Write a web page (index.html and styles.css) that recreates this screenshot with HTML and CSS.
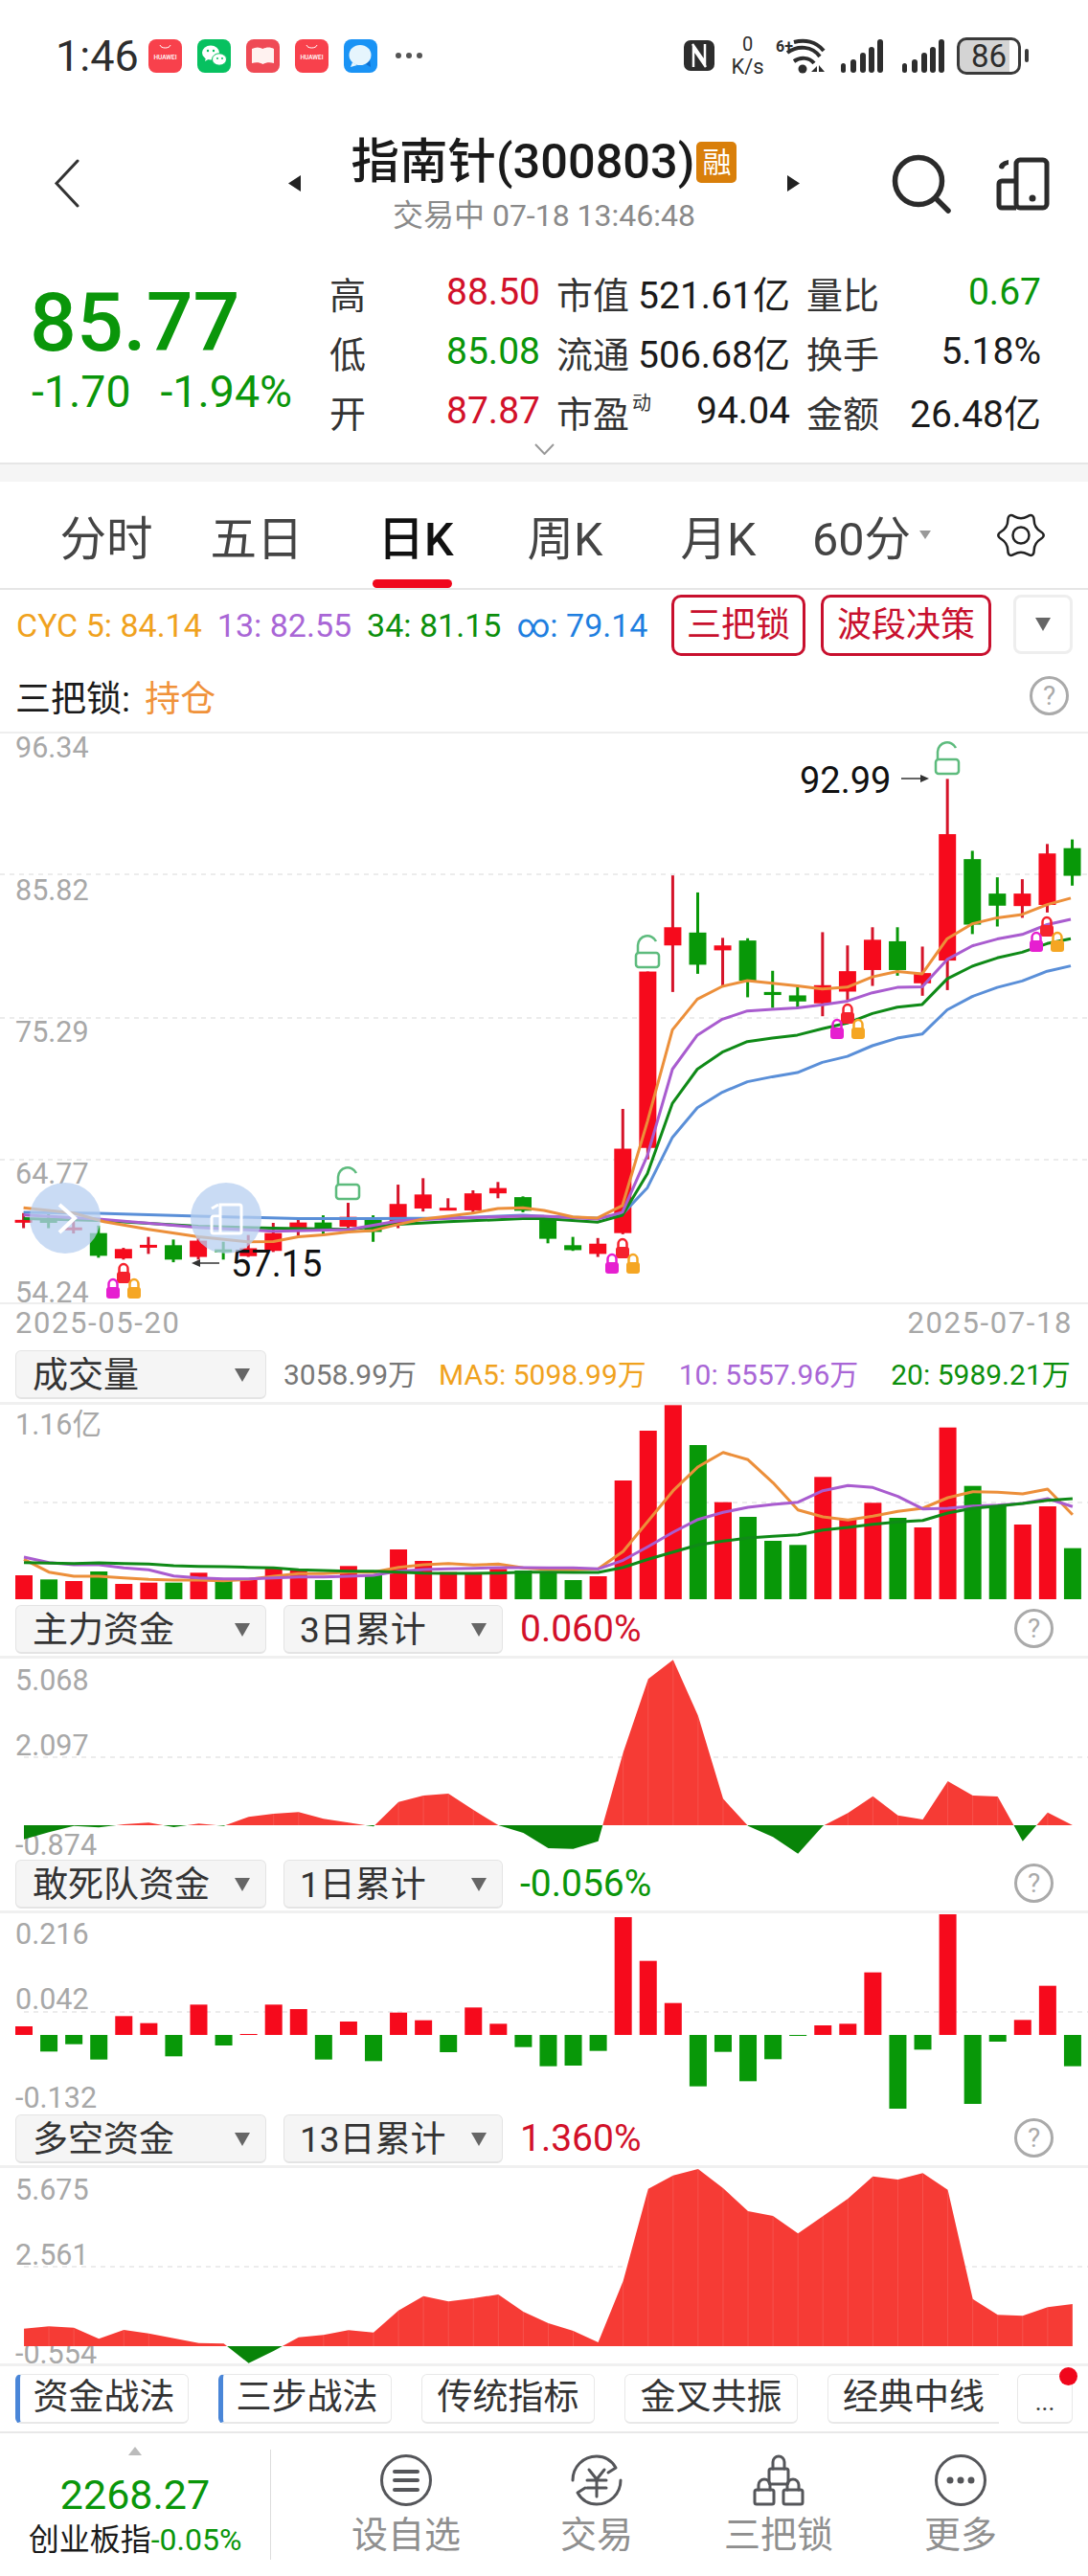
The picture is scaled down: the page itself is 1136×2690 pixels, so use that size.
FILE: index.html
```html
<!DOCTYPE html>
<html lang="zh-CN">
<head>
  <meta charset="UTF-8">
  <title>指南针(300803)</title>
  <link rel="stylesheet" href="styles.css">
</head>
<body>

  <!-- barra de estado -->
  <div class="status">
    <span class="time">1:46</span>
    <div class="apps">
      <svg class="app" viewBox="0 0 35 35"><rect width="35" height="35" rx="8" fill="#f8414c"/><path d="M12 6c1 4 10 4 11 0" fill="none" stroke="#fff" stroke-width="1"/><text x="17.5" y="21" class="app-text">HUAWEI</text></svg>
      <svg class="app" viewBox="0 0 35 35"><rect width="35" height="35" rx="8" fill="#07c160"/><ellipse cx="14" cy="14" rx="9" ry="7.5" fill="#fff"/><path d="M9 19l-1 4 5-3z" fill="#fff"/><ellipse cx="23" cy="21" rx="7.5" ry="6.2" fill="#fff" stroke="#07c160"/><circle cx="11" cy="12" r="1.2" fill="#07c160"/><circle cx="17" cy="12" r="1.2" fill="#07c160"/><circle cx="21" cy="20" r="1" fill="#07c160"/><circle cx="26" cy="20" r="1" fill="#07c160"/></svg>
      <svg class="app" viewBox="0 0 35 35"><rect width="35" height="35" rx="8" fill="#ef4a55"/><path d="M6 10c4-2 8-2 11.500 0 3.500-2 8-2 11.500 0v15c-4-1-8-1-11.500 1-3.500-2-7.500-2-11.500-1z" fill="#fff2f0"/></svg>
      <svg class="app" viewBox="0 0 35 35"><rect width="35" height="35" rx="8" fill="#f8414c"/><path d="M12 6c1 4 10 4 11 0" fill="none" stroke="#fff" stroke-width="1"/><text x="17.5" y="21" class="app-text">HUAWEI</text></svg>
      <svg class="app" viewBox="0 0 35 35"><rect width="35" height="35" rx="8" fill="#1a93f5"/><path d="M28 29l-5-3 4-5z" fill="#0d6fd0"/><ellipse cx="17" cy="16.500" rx="11.500" ry="10.500" fill="#e6f5fd"/><path d="M9 24l-2 5 7-2z" fill="#e6f5fd"/></svg>
    </div>
    <div class="dots"><i></i><i></i><i></i></div>
    <div class="status-right">
      <svg class="ic-nfc" viewBox="0 0 32 32"><rect width="32" height="32" rx="7" fill="#2d2d2d"/><path d="M10 28V9l13 19M22 4v19L9 4" fill="none" stroke="#fff" stroke-width="2.500"/></svg>
      <div class="speed"><span>0</span><span>K/s</span></div>
      <svg class="ic-wifi" viewBox="0 0 51 37"><text x="0" y="14" class="wifi-text">6+</text><path d="M19 4c11-3 23-1 31 9M12 15c11-8 26-7 34 4M19 24c7-5 16-4 21 2" fill="none" stroke="#2d2d2d" stroke-width="4"/><circle cx="28" cy="32" r="4.500" fill="#2d2d2d"/><path d="M37 35l6-6v6zM45 28l6 7h-6z" fill="#2d2d2d"/></svg>
      <svg class="ic-signal" viewBox="0 0 44 35"><rect y="25" width="5" height="10" rx="2.500"/><rect x="10" y="21" width="6" height="14" rx="3"/><rect x="20" y="14" width="6" height="21" rx="3"/><rect x="29" y="8" width="6" height="27" rx="3"/><rect x="38" width="6" height="35" rx="3"/></svg>
      <svg class="ic-signal second" viewBox="0 0 44 35"><rect y="25" width="5" height="10" rx="2.500"/><rect x="10" y="21" width="6" height="14" rx="3"/><rect x="20" y="14" width="6" height="21" rx="3"/><rect x="29" y="8" width="6" height="27" rx="3"/><rect x="38" width="6" height="35" rx="3"/></svg>
      <div class="battery"><span>86</span></div>
      <i class="battery-nub"></i>
    </div>
  </div>

  <div class="nav">
    <svg class="ic-back" viewBox="0 0 27 51"><path d="M25 2L3 25.500 25 49" fill="none" stroke="#333" stroke-width="3" stroke-linecap="round"/></svg>
    <svg class="ic-tri left" viewBox="0 0 13 17"><path d="M13 0v17L0 8.500z"/></svg>
    <div class="title-col">
      <div class="title-row"><h1>指南针(300803)</h1><span class="badge">融</span></div>
      <div class="subtitle">交易中 07-18 13:46:48</div>
    </div>
    <svg class="ic-tri right" viewBox="0 0 13 17"><path d="M0 0v17l13-8.500z"/></svg>
    <svg class="ic-search" viewBox="0 0 62 62"><circle cx="28" cy="28" r="24.500" fill="none" stroke="#2b2b2b" stroke-width="5.500"/><path d="M46 46l13 13" stroke="#2b2b2b" stroke-width="5.500" stroke-linecap="round"/></svg>
    <svg class="ic-phone" viewBox="0 0 56 56"><g fill="none" stroke="#2b2b2b" stroke-width="5" stroke-linejoin="round"><rect x="21" y="3" width="32" height="50" rx="4"/><path d="M21 53H6a3 3 0 0 1-3-3V28a3 3 0 0 1 3-3h15"/></g><path d="M13 3c-5 1-9 3-10 7 0 2 3 3 5 2 1-3 3-4 5-4z" fill="#2b2b2b"/><circle cx="38" cy="43" r="3.500" fill="#2b2b2b"/></svg>
  </div>

  <div class="quote">
    <div class="quote-main">
      <div class="price-box">
        <div class="price">85.77</div>
        <div class="change"><span>-1.70</span><span>-1.94%</span></div>
      </div>
      <div class="stats">
        <div class="stat"><span>高</span><b class="up">88.50</b></div>
        <div class="stat"><span>市值</span><b>521.61亿</b></div>
        <div class="stat"><span>量比</span><b class="down">0.67</b></div>
        <div class="stat"><span>低</span><b class="down">85.08</b></div>
        <div class="stat"><span>流通</span><b>506.68亿</b></div>
        <div class="stat"><span>换手</span><b>5.18%</b></div>
        <div class="stat"><span>开</span><b class="up">87.87</b></div>
        <div class="stat"><span>市盈<sup>动</sup></span><b>94.04</b></div>
        <div class="stat"><span>金额</span><b>26.48亿</b></div>
      </div>
    </div>
    <svg class="ic-more" viewBox="0 0 21 12"><path d="M1 1l9.500 10L20 1" fill="none" stroke="#999" stroke-width="2"/></svg>
  </div>

  <div class="band"></div>

  <div class="tabs">
    <div class="tab">分时</div>
    <div class="tab">五日</div>
    <div class="tab active">日K</div>
    <div class="tab">周K</div>
    <div class="tab">月K</div>
    <div class="tab">60分<i class="tab-caret"></i></div>
    <svg class="ic-gear" viewBox="0 0 50 50"><path d="M45.430 29Q38.860 33 38.680 40.690Q38.500 48.380 31.750 44.690Q25 41 18.250 44.690Q11.500 48.380 11.320 40.690Q11.140 33 4.570 29Q-2 25 4.570 21Q11.140 17 11.320 9.310Q11.500 1.620 18.250 5.310Q25 9 31.750 5.310Q38.500 1.620 38.680 9.310Q38.860 17 45.430 21Q52 25 45.430 29Z" fill="none" stroke="#222" stroke-width="2.500"/><circle cx="25" cy="25" r="8.500" fill="none" stroke="#222" stroke-width="2.500"/></svg>
  </div>

  <div class="ma-row">
    <span class="c-orange">CYC 5: 84.14</span>
    <span class="c-purple">13: 82.55</span>
    <span class="c-green">34: 81.15</span>
    <span class="c-blue">∞: 79.14</span>
    <button class="red-btn first">三把锁</button>
    <button class="red-btn">波段决策</button>
    <button class="drop-btn"><i class="caret"></i></button>
  </div>

  <div class="lock-row">
    <span>三把锁: <em>持仓</em></span>
    <span class="help">?</span>
  </div>

  <svg id="chartMain" class="chart main"></svg>

  <div class="dates"><span>2025-05-20</span><span>2025-07-18</span></div>

  <div class="tool vol">
    <div class="select">成交量<i class="caret"></i></div>
    <span class="c-gray">3058.99万</span>
    <span class="c-orange">MA5: 5098.99万</span>
    <span class="c-purple">10: 5557.96万</span>
    <span class="c-green">20: 5989.21万</span>
  </div>
  <svg id="chartVol" class="chart vol-chart"></svg>

  <div class="tool">
    <div class="select">主力资金<i class="caret"></i></div>
    <div class="select small">3日累计<i class="caret"></i></div>
    <span class="pct up">0.060%</span>
    <span class="help">?</span>
  </div>
  <svg id="chartMainFund" class="chart"></svg>

  <div class="tool">
    <div class="select">敢死队资金<i class="caret"></i></div>
    <div class="select small">1日累计<i class="caret"></i></div>
    <span class="pct down">-0.056%</span>
    <span class="help">?</span>
  </div>
  <svg id="chartDaily" class="chart"></svg>

  <div class="tool">
    <div class="select">多空资金<i class="caret"></i></div>
    <div class="select small">13日累计<i class="caret"></i></div>
    <span class="pct up">1.360%</span>
    <span class="help">?</span>
  </div>
  <svg id="chartLong" class="chart"></svg>

  <div class="strategy">
    <div class="st marked">资金战法</div>
    <div class="st marked">三步战法</div>
    <div class="st">传统指标</div>
    <div class="st">金叉共振</div>
    <div class="st clipped">经典中线</div>
    <div class="st more">...<i class="red-dot"></i></div>
  </div>

  <div class="foot">
    <div class="index">
      <i class="index-up"></i>
      <div class="index-val">2268.27</div>
      <div class="index-name">创业板指<span>-0.05%</span></div>
    </div>
    <div class="foot-nav">
      <div class="foot-item">
        <svg viewBox="0 0 54 54"><circle cx="27" cy="27" r="25.500" class="ln"/><path d="M15 18h24M15 27h24M15 37h24" class="ln thick"/></svg>
        <span>设自选</span>
      </div>
      <div class="foot-item">
        <svg viewBox="0 0 54 54"><path d="M2 27C2 13 13 2 27 2c9 0 16 5 20 12l-8 5M52 27c0 14-11 25-25 25-9 0-16-5-20-12l8-5" class="ln"/><path d="M19 16l8 10 8-10M17 27h20M17 35h20M27 26v18" class="ln"/></svg>
        <span>交易</span>
      </div>
      <div class="foot-item">
        <svg viewBox="0 0 54 54"><g class="ln"><rect x="17" y="15" width="20" height="16" rx="2"/><path d="M21 15V8a6 6 0 0 1 12 0v7"/><rect x="2" y="37" width="20" height="15" rx="2"/><path d="M6 37v-5a6 6 0 0 1 12 0v5"/><rect x="32" y="37" width="20" height="15" rx="2"/><path d="M36 37v-5a6 6 0 0 1 12 0v5"/></g></svg>
        <span>三把锁</span>
      </div>
      <div class="foot-item">
        <svg viewBox="0 0 54 54"><circle cx="27" cy="27" r="25.500" class="ln"/><circle cx="16" cy="27" r="3.500" fill="#55565a"/><circle cx="27" cy="27" r="3.500" fill="#55565a"/><circle cx="38" cy="27" r="3.500" fill="#55565a"/></svg>
        <span>更多</span>
      </div>
    </div>
  </div>

  <script src="chart.js"></script>
</body>
</html>
```

FILE: styles.css
```css
* {
  box-sizing: border-box;
}
body {
  margin: 0;
  width: 1136px;
  height: 2690px;
  overflow: hidden;
  font-family: Roboto, "Noto Sans CJK SC", sans-serif;
  background-color: #fff;
  color: #1a1a1a;
}
i {
  display: block;
  font-style: normal;
}
.up { color: #d2112a; }
.down { color: #0a960a; }
.c-orange { color: #f0a21e; }
.c-purple { color: #a966d6; }
.c-green { color: #0c8f0c; }
.c-blue { color: #1f7fe0; }
.c-gray { color: #777; }

/* status bar */
.status {
  height: 100px;
  display: flex;
  align-items: center;
  padding: 16px 0 0 58px;
}
.time {
  font-size: 45px;
  width: 97px;
  color: #2d2d2d;
}
.apps {
  display: flex;
  gap: 16px;
}
.app {
  width: 35px;
  height: 35px;
}
.app-text {
  font-size: 6.5px;
  fill: #fff;
  text-anchor: middle;
  font-weight: 500;
}
.dots {
  display: flex;
  gap: 5px;
  margin-left: 19px;
}
.dots i {
  width: 6px;
  height: 6px;
  border-radius: 50%;
  background: #555;
}
.status-right {
  display: flex;
  align-items: center;
  margin-left: 273px;
}
.ic-nfc {
  width: 32px;
  height: 32px;
}
.speed {
  width: 35px;
  margin-left: 17px;
  display: flex;
  flex-direction: column;
  align-items: center;
  color: #2d2d2d;
  line-height: 20px;
  font-size: 20px;
}
.speed span:last-child {
  font-size: 22px;
  margin-top: 4px;
}
.ic-wifi {
  width: 51px;
  height: 37px;
  margin-left: 12px;
  overflow: visible;
}
.wifi-text {
  font-size: 16px;
  font-weight: 700;
  fill: #2d2d2d;
}
.ic-signal {
  width: 44px;
  height: 35px;
  margin-left: 17px;
  fill: #2d2d2d;
}
.ic-signal.second {
  margin-left: 20px;
}
.battery {
  width: 67px;
  height: 39px;
  margin-left: 13px;
  border: 3px solid #3a3a3a;
  border-radius: 10px;
  background: linear-gradient(90deg, #d4d4d4 86%, #fff 86%);
  text-align: center;
  font-size: 33px;
  line-height: 33px;
  color: #2d2d2d;
}
.battery-nub {
  width: 4px;
  height: 14px;
  margin-left: 4px;
  border-radius: 2px;
  background: #3a3a3a;
}

/* header */
.nav {
  height: 145px;
  display: flex;
  align-items: center;
  padding: 43px 0 5px 56px;
}
.ic-back {
  width: 27px;
  height: 51px;
}
.ic-tri {
  width: 13px;
  height: 17px;
  fill: #222;
}
.ic-tri.left {
  margin-left: 218px;
}
.title-col {
  width: 402px;
  margin: 0 53px;
  display: flex;
  flex-direction: column;
  align-items: center;
}
.title-row {
  display: flex;
  align-items: center;
  height: 50px;
  padding-top: 2px;
}
h1 {
  margin: 0;
  font-size: 50.500px;
  font-weight: 500;
  line-height: 50px;
  white-space: nowrap;
  color: #1a1a1a;
}
.badge {
  width: 42px;
  height: 43px;
  margin-left: 2px;
  border-radius: 5px;
  background-color: #d97f0a;
  color: #fff;
  font-size: 30px;
  line-height: 43px;
  text-align: center;
}
.subtitle {
  margin-top: 17px;
  font-size: 32px;
  line-height: 30px;
  white-space: nowrap;
  color: #8a8a8a;
}
.ic-search {
  width: 62px;
  height: 62px;
  margin-left: 96px;
}
.ic-phone {
  width: 56px;
  height: 56px;
  margin-left: 47px;
}

/* quote */
.quote {
  height: 240px;
  padding-top: 29px;
  border-bottom: 2px solid #e6e6e6;
}
.quote-main {
  display: flex;
  height: 190px;
  padding-left: 33px;
}
.price-box {
  width: 311px;
  padding-top: 17px;
  color: #0a960a;
}
.price {
  margin-left: -2px;
  font-size: 86px;
  line-height: 92px;
  font-weight: 500;
}
.change {
  display: flex;
  gap: 31px;
  margin-top: 3px;
  font-size: 46.500px;
  line-height: 46px;
  white-space: nowrap;
}
.stats {
  display: grid;
  grid-template-columns: 220px 244px 245px;
  grid-auto-rows: 62px;
  column-gap: 17px;
  font-size: 38px;
}
.stat {
  display: flex;
  justify-content: space-between;
  align-items: center;
}
.stat span {
  color: #333;
  white-space: nowrap;
}
.stat b {
  font-weight: 400;
  font-size: 39px;
}
.stat sup {
  font-size: 20px;
  line-height: 0;
  vertical-align: 18px;
  margin-left: 3px;
}
.ic-more {
  display: block;
  width: 21px;
  height: 12px;
  margin: -1px auto 0;
}
.band {
  height: 18px;
  background-color: #f5f5f5;
}

/* period tabs */
.tabs {
  height: 113px;
  display: grid;
  grid-template-columns: 158px 156px 176px 136px 184px 136px auto;
  align-items: center;
  padding-left: 32px;
  border-bottom: 2px solid #e6e6e6;
  font-size: 48.500px;
  color: #444;
}
.tab {
  position: relative;
  height: 100%;
  display: flex;
  align-items: center;
  justify-content: center;
  white-space: nowrap;
}
.tab.active {
  color: #111;
  font-weight: 500;
}
.tab.active::after {
  content: "";
  position: absolute;
  left: calc(50% - 45px);
  bottom: 0;
  width: 83px;
  height: 9px;
  border-radius: 5px;
  background-color: #f0071c;
}
.tab-caret {
  margin-left: 9px;
  border-left: 6.500px solid transparent;
  border-right: 6.500px solid transparent;
  border-top: 9px solid #999;
}
.ic-gear {
  width: 50px;
  height: 50px;
  margin-left: 63px;
}

/* indicator lines */
.ma-row {
  height: 75px;
  display: flex;
  align-items: flex-start;
  padding: 5px 16px 0 17px;
  gap: 16px;
  font-size: 34px;
  line-height: 64px;
  white-space: nowrap;
}
.red-btn {
  height: 64px;
  padding: 0;
  border: 3px solid #c8102e;
  border-radius: 10px;
  background: #fff;
  color: #c8102e;
  font-family: inherit;
  font-size: 36px;
  line-height: 56px;
}
.red-btn.first {
  margin-left: auto;
  width: 140px;
}
.red-btn + .red-btn {
  width: 178px;
}
.drop-btn {
  width: 62px;
  height: 62px;
  margin-left: 7px;
  padding: 0;
  display: flex;
  align-items: center;
  justify-content: center;
  border: 3px solid #eee;
  border-radius: 8px;
  background: #fff;
}
.caret {
  width: 0;
  height: 0;
  border-left: 8px solid transparent;
  border-right: 8px solid transparent;
  border-top: 14px solid #666;
}
.lock-row {
  height: 75px;
  display: flex;
  justify-content: space-between;
  align-items: center;
  padding: 0 20px 2px 16px;
  font-size: 37px;
  border-bottom: 2px solid #eee;
}
.lock-row em {
  margin-left: 6px;
  font-style: normal;
  color: #f0923a;
}
.help {
  width: 41px;
  height: 41px;
  border: 3px solid #aaa;
  border-radius: 50%;
  color: #aaa;
  font-size: 28px;
  line-height: 35px;
  text-align: center;
}

/* charts */
.chart {
  display: block;
  width: 1136px;
  height: 204px;
  overflow: visible;
}
.chart.main {
  height: 594px;
}
.chart.vol-chart {
  height: 203px;
}
.axis {
  font-size: 30.500px;
  fill: #a8a8a8;
}
.mark {
  font-size: 38px;
  fill: #111;
}
.dates {
  height: 44px;
  display: flex;
  justify-content: space-between;
  padding: 0 16px;
  border-top: 2px solid #eee;
  font-size: 31px;
  letter-spacing: 1.600px;
  line-height: 40px;
  color: #a8a8a8;
}

/* panel toolbars */
.tool {
  height: 62px;
  display: flex;
  align-items: flex-start;
  padding: 6px 0 0 16px;
  border-bottom: 3px solid #f0f0f0;
  font-size: 30px;
  line-height: 51px;
  white-space: nowrap;
}
.tool.vol {
  height: 63px;
  gap: 0 34px;
}
.tool.vol .select {
  margin-right: -16px;
}
.tool.vol .c-gray {
  margin-right: -11px;
}
.select {
  width: 262px;
  height: 51px;
  flex: none;
  display: flex;
  align-items: center;
  justify-content: space-between;
  padding: 2px 16px 0 17px;
  background-color: #f5f5f5;
  border: 1px solid #e4e4e4;
  border-bottom-width: 2px;
  border-radius: 6px;
  font-size: 37px;
  color: #333;
}
.select.small {
  width: 229px;
  margin-left: 18px;
  padding-left: 16px;
}
.pct {
  margin-left: 18px;
  font-size: 39px;
}
.tool .help {
  margin: 4px 36px 0 auto;
}

/* strategy tabs */
.strategy {
  height: 73px;
  display: flex;
  align-items: flex-start;
  padding: 8px 0 0 16px;
  gap: 31px;
  border-top: 3px solid #f0f0f0;
  border-bottom: 2px solid #e8e8e8;
}
.st {
  position: relative;
  width: 181px;
  height: 52px;
  border: 1px solid #e8e8e8;
  border-bottom-width: 2px;
  border-radius: 6px;
  font-size: 37px;
  line-height: 48px;
  text-align: center;
  color: #333;
  white-space: nowrap;
}
.st.marked {
  border-left: 5px solid #4a86d8;
}
.st.clipped {
  width: 179px;
  border-right: none;
  border-radius: 6px 0 0 6px;
}
.st.more {
  width: 58px;
  margin-left: -12px;
  font-size: 26px;
  line-height: 56px;
}
.red-dot {
  position: absolute;
  top: -8px;
  right: -6px;
  width: 19px;
  height: 19px;
  border-radius: 50%;
  background-color: #f0071c;
}

/* bottom bar */
.foot {
  height: 149px;
  display: flex;
  padding-top: 17px;
}
.index {
  width: 283px;
  height: 115px;
  display: flex;
  flex-direction: column;
  align-items: center;
  border-right: 1px solid #ddd;
}
.index-up {
  margin-top: -3px;
  border-left: 7px solid transparent;
  border-right: 7px solid transparent;
  border-bottom: 9px solid #bbb;
}
.index-val {
  margin-top: 19px;
  font-size: 43px;
  line-height: 44px;
  color: #0a960a;
}
.index-name {
  margin-top: 10px;
  font-size: 32px;
  line-height: 30px;
  white-space: nowrap;
  color: #1a1a1a;
}
.index-name span {
  color: #0a960a;
}
.foot-nav {
  display: grid;
  grid-template-columns: 198px 200px 180px 200px;
  padding-left: 42px;
}
.foot-item {
  display: flex;
  flex-direction: column;
  align-items: center;
  padding-top: 5px;
  font-size: 38px;
  line-height: 36px;
  color: #8f8f8f;
}
.foot-item svg {
  width: 54px;
  height: 54px;
  margin-bottom: 12px;
}
.ln {
  fill: none;
  stroke: #55565a;
  stroke-width: 3;
  stroke-linecap: round;
  stroke-linejoin: round;
}
.ln.thick {
  stroke-width: 4;
}
```

FILE: chart.js
```js
const RED = '#f60a1c';
const GREEN = '#089808';
const AREA_RED = '#f63b35';
const AREA_GREEN = '#088408';

function barX(i) {
  return 25 + 26.07 * i;
}

function setupSvg(id, top, height) {
  const svg = document.getElementById(id);
  svg.setAttribute('viewBox', `0 ${top} 1136 ${height}`);
  return svg;
}

function polyline(points, color, width) {
  const d = points.map(p => p[0].toFixed(1) + ',' + p[1].toFixed(1)).join(' ');
  return `<polyline points="${d}" fill="none" stroke="${color}" stroke-width="${width}" stroke-linejoin="round"/>`;
}

function gridLine(y, x1, x2) {
  return `<line x1="${x1}" x2="${x2}" y1="${y}" y2="${y}" stroke="#e6e6e6" stroke-width="1.500" stroke-dasharray="5 5"/>`;
}

function axis(text, y) {
  return `<text x="16" y="${y}" class="axis">${text}</text>`;
}

function lock(cx, cy, color) {
  return `<path d="M${cx - 4.5} ${cy - 1}v-4a4.500 5 0 0 1 9 0v4" fill="none" stroke="${color}" stroke-width="2.500"/>` +
    `<rect x="${cx - 7}" y="${cy - 2}" width="14" height="12" rx="3" fill="${color}"/>`;
}

function lockTrio(x, y) {
  return lock(x, y, '#f5222d') + lock(x - 11, y + 16, '#e61fd0') + lock(x + 11, y + 16, '#f5a623');
}

function openLock(cx, top) {
  return `<g fill="none" stroke="#5dbb7d" stroke-width="2.500">` +
    `<rect x="${cx - 12}" y="${top + 19}" width="24" height="15" rx="3"/>` +
    `<path d="M${cx - 10} ${top + 19}v-8a10 10 0 0 1 19 -4"/></g>`;
}

/* ---- K line: [color, wick top, body top, body bottom, wick bottom] ---- */
const candles = [
  ['r',1282,1300,1306,1322],['g',1285,1296,1308,1322],['r',1300,1320,1327,1336],['g',1315,1335,1395,1400],
  ['r',1374,1377,1402,1405],['r',1345,1366,1373,1390],['g',1352,1367,1405,1412],['r',1345,1355,1398,1405],
  ['g',1358,1378,1383,1405],['r',1340,1375,1396,1398],['r',1308,1335,1382,1385],['r',1295,1307,1327,1342],
  ['g',1288,1307,1327,1338],['r',1255,1292,1318,1322],['g',1288,1300,1332,1358],['r',1207,1258,1312,1322],
  ['r',1190,1233,1270,1278],['r',1243,1268,1275,1275],['r',1222,1230,1275,1280],['r',1200,1216,1230,1243],
  ['g',1238,1240,1276,1280],['g',1295,1298,1350,1362],['g',1345,1367,1380,1382],['r',1348,1363,1390,1398],
  ['r',1007,1112,1335,1338],['r',644,644,1110,1140],['r',390,527,575,698],['g',435,541,626,650],
  ['r',555,575,588,682],['g',556,562,668,712],['g',642,698,706,740],['g',680,707,723,740],
  ['r',540,680,728,762],['r',575,643,697,720],['r',527,560,640,682],['g',527,564,640,655],
  ['r',578,648,675,708],['r',135,281,615,693],['g',325,347,520,545],['g',395,438,470,525],
  ['r',400,438,471,502],['r',307,332,468,488],['g',295,318,391,417]
];

const mainY = z => 760 + z / 2.53;
const leftX = z => z / 2.76;
const rightX = z => 568 + z / 2.76;

const maLines = [
  { color: '#5a8fd8',
    left: [[68,1280],[284,1283],[572,1290],[860,1297],[1076,1297],[1291,1295],[1507,1288]],
    right: [[0,1291],[154,1295],[226,1285],[298,1215],[370,1082],[442,1004],[514,963],[586,935],[658,922],[730,911],[802,884],[874,868],[946,840],[1018,820],[1090,809],[1162,745],[1234,710],[1306,686],[1378,669],[1450,643],[1518,629]] },
  { color: '#0f8a17',
    left: [[68,1297],[284,1302],[572,1317],[788,1322],[1004,1325],[1147,1312],[1291,1305],[1507,1297]],
    right: [[0,1297],[154,1306],[226,1288],[298,1178],[370,992],[442,902],[514,857],[586,829],[658,820],[730,812],[802,795],[874,780],[946,755],[1018,738],[1090,731],[1162,663],[1234,630],[1306,608],[1378,593],[1450,570],[1518,557]] },
  { color: '#a95ccf',
    left: [[68,1287],[284,1298],[572,1320],[788,1330],[1004,1326],[1147,1303],[1291,1296],[1507,1290]],
    right: [[0,1290],[154,1298],[226,1280],[298,1130],[370,902],[442,812],[514,770],[586,748],[658,744],[730,740],[802,732],[874,722],[946,700],[1018,686],[1090,684],[1162,612],[1234,576],[1306,558],[1378,546],[1450,520],[1518,506]] },
  { color: '#ec8f3a',
    left: [[68,1268],[212,1282],[300,1305],[428,1325],[572,1345],[716,1358],[788,1357],[860,1345],[932,1340],[1004,1332],[1076,1328],[1147,1312],[1219,1298],[1291,1290],[1363,1282],[1435,1270],[1507,1268]],
    right: [[0,1275],[83,1292],[154,1295],[226,1262],[298,1040],[370,798],[442,717],[514,683],[586,668],[658,675],[730,682],[802,690],[874,685],[946,658],[1018,644],[1090,650],[1162,557],[1234,518],[1306,502],[1378,493],[1450,467],[1518,450]] }
];

function drawMain() {
  const svg = setupSvg('chartMain', 766, 594);
  let s = gridLine(913, 0, 1136) + gridLine(1063, 0, 1136) + gridLine(1211, 0, 1136);
  s += axis('96.34', 791) + axis('85.82', 940) + axis('75.29', 1088) + axis('64.77', 1236) + axis('54.24', 1360);

  candles.forEach((c, i) => {
    const x = barX(i) - 0.4;
    const body = c[0] === 'r' ? RED : GREEN;
    const wick = c[0] === 'r' ? '#d5142a' : GREEN;
    s += `<line x1="${x}" x2="${x}" y1="${mainY(c[1])}" y2="${mainY(c[4])}" stroke="${wick}" stroke-width="3"/>`;
    s += `<rect x="${x - 9}" y="${mainY(c[2])}" width="18" height="${Math.max(3, (c[3] - c[2]) / 2.53)}" fill="${body}"/>`;
  });

  maLines.forEach(l => {
    const pts = l.left.map(p => [leftX(p[0]), mainY(p[1])])
      .concat(l.right.map(p => [rightX(p[0]), mainY(p[1])]));
    s += polyline(pts, l.color, 3);
  });

  s += openLock(363, 1218) + openLock(676, 976) + openLock(989, 774);
  s += lockTrio(129, 1330) + lockTrio(650, 1304) + lockTrio(885, 1059) + lockTrio(1093, 968);

  s += `<text x="241" y="1333" class="mark">57.15</text><path d="M229 1319h-22" stroke="#333" stroke-width="1.500"/><path d="M200 1319l9-4v8z" fill="#333"/>`;
  s += `<text x="835" y="828" class="mark">92.99</text><path d="M941 813h22" stroke="#333" stroke-width="1.500"/><path d="M970 813l-9-4v8z" fill="#333"/>`;

  /* botones flotantes */
  s += `<circle cx="68" cy="1272" r="37" fill="#b7cff0" fill-opacity="0.75"/><path d="M62 1258l16 14-16 15" fill="none" stroke="#fff" stroke-width="4"/>`;
  s += `<circle cx="236" cy="1272" r="37" fill="#b7cff0" fill-opacity="0.75"/>` +
    `<path d="M230 1258h20a2 2 0 0 1 2 2v26a2 2 0 0 1 -2 2h-20zM230 1288h-7a2 2 0 0 1 -2 -2v-14a2 2 0 0 1 2 -2h7" fill="none" stroke="#fff" stroke-width="3"/>` +
    `<path d="M221 1262l7-4" stroke="#fff" stroke-width="3"/>`;
  svg.innerHTML = s;
}

/* ---- volumen ---- */
const volBars = [
  ['r',795],['g',808],['r',813],['g',783],['r',822],['r',818],['g',818],['r',787],['g',812],['r',808],['r',772],
  ['r',780],['g',810],['r',766],['g',795],['r',714],['r',750],['r',785],['r',790],['r',775],['g',780],['g',785],
  ['g',810],['r',798],['r',498],['r',342],['r',262],['g',387],['r',566],['g',612],['g',687],['g',700],['r',487],
  ['r',620],['r',568],['g',615],['r',645],['r',332],['g',515],['g',578],['r',636],['r',579],['g',710]
];
const volOrange = [745,785,798,798,803,808,810,810,812,808,798,790,790,785,785,770,762,758,763,760,772,777,778,775,720,625,530,455,410,433,505,590,612,622,610,595,585,552,533,535,540,525,605];
const volPurple = [738,755,762,762,772,778,797,803,806,806,803,800,800,798,795,782,777,775,773,771,771,772,772,775,748,705,660,620,598,582,573,566,530,514,520,548,587,585,578,575,570,555,580];
const volGreen = [755,757,758,756,758,760,765,767,768,770,772,778,780,782,782,785,788,789,789,788,785,785,786,786,770,745,722,700,688,678,673,668,653,645,635,628,623,600,585,578,570,560,555];

function drawVolume() {
  const svg = setupSvg('chartVol', 1467, 203);
  const y = z => 1380 + z / 3;
  let s = gridLine(1569, 25, 1136);
  s += `<text x="16" y="1498" class="axis">1.16亿</text>`;
  volBars.forEach((b, i) => {
    s += `<rect x="${barX(i) - 9}" y="${y(b[1])}" width="18" height="${1670 - y(b[1])}" fill="${b[0] === 'r' ? RED : GREEN}"/>`;
  });
  [[volOrange, '#ec8f3a', 3], [volPurple, '#a95ccf', 3], [volGreen, '#0f8a17', 3]].forEach(l => {
    s += polyline(l[0].map((v, i) => [barX(i), y(v)]), l[1], l[2]);
  });
  svg.innerHTML = s;
}

/* ---- area: rojo sobre la base, verde debajo ---- */
function area(id, values, toY, base, top, height) {
  const pts = values.map((v, i) => [barX(i), toY(v)]);
  const d = pts.map(p => p[0].toFixed(1) + ',' + p[1].toFixed(1)).join(' ');
  const poly = `${barX(0)},${base} ${d} ${barX(42)},${base}`;
  let s = `<clipPath id="${id}A"><rect x="0" y="${top}" width="1136" height="${base - top}"/></clipPath>`;
  s += `<clipPath id="${id}B"><rect x="0" y="${base}" width="1136" height="${top + height - base}"/></clipPath>`;
  s += `<polygon points="${poly}" fill="${AREA_RED}" clip-path="url(#${id}A)"/>`;
  s += `<polygon points="${poly}" fill="${AREA_GREEN}" clip-path="url(#${id}B)"/>`;
  pts.forEach(p => {
    if (p[1] < base - 10) s += `<line x1="${p[0]}" x2="${p[0]}" y1="${p[1]}" y2="${base}" stroke="#fff" stroke-opacity="0.12"/>`;
  });
  return s;
}

const mainFund = [722,700,680,685,675,670,684,673,680,652,642,637,658,670,682,605,585,579,630,678,702,750,752,728,450,220,160,335,595,680,715,767,680,640,587,647,660,540,585,588,728,638,678];
const longFund = [725,718,722,757,729,740,755,770,772,833,795,752,745,730,737,668,623,640,630,618,672,708,732,768,575,287,245,225,285,357,372,427,373,318,248,258,238,290,632,682,685,658,648];
const dailyFund = [1308,1387,1364,1412,1276,1298,1402,1240,1368,1332,1240,1254,1412,1293,1417,1265,1289,1389,1249,1300,1373,1433,1431,1385,966,1103,1235,1496,1388,1480,1411,1336,1305,1300,1139,1566,1381,957,1551,1356,1288,1181,1433];

function drawMainFund() {
  const svg = setupSvg('chartMainFund', 1732, 204);
  const y = z => 1680 + z / 3;
  let s = gridLine(1835, 25, 1136);
  s += axis('5.068', 1765) + axis('2.097', 1833) + axis('-0.874', 1937);
  s += area('mf', mainFund, y, 1906, 1732, 204);
  svg.innerHTML = s;
}

function drawDaily() {
  const svg = setupSvg('chartDaily', 1998, 204);
  const y = z => 1680 + z / 3;
  const base = 2125;
  let s = gridLine(2101, 25, 1136);
  s += axis('0.216', 2030) + axis('0.042', 2098) + axis('-0.132', 2201);
  dailyFund.forEach((v, i) => {
    const vy = y(v);
    const red = vy < base;
    const h = Math.max(1, Math.abs(vy - base));
    s += `<rect x="${barX(i) - 9}" y="${red ? vy : base}" width="18" height="${h}" fill="${red ? RED : GREEN}"/>`;
  });
  svg.innerHTML = s;
}

function drawLong() {
  const svg = setupSvg('chartLong', 2264, 204);
  const y = z => 2190 + z / 3;
  let s = gridLine(2367, 25, 1136);
  s += axis('5.675', 2297) + axis('2.561', 2365) + axis('-0.554', 2468);
  s += area('lf', longFund, y, 2450, 2264, 204);
  svg.innerHTML = s;
}

drawMain();
drawVolume();
drawMainFund();
drawDaily();
drawLong();
```
